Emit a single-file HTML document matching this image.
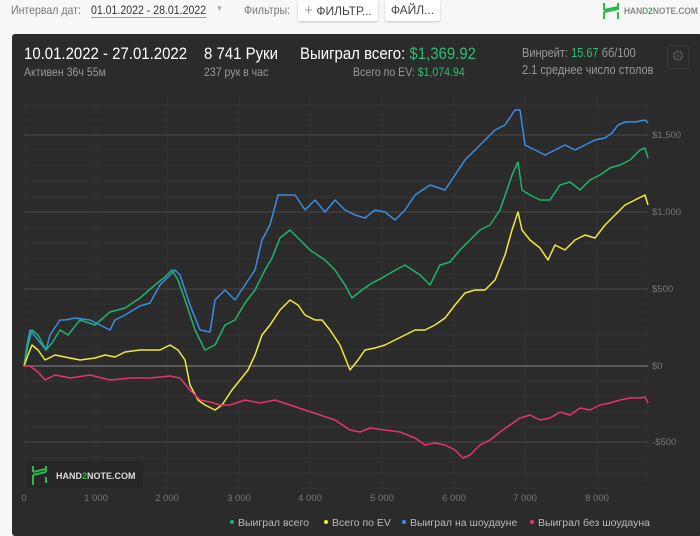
<!DOCTYPE html>
<html><head><meta charset="utf-8"><style>
*{margin:0;padding:0;box-sizing:border-box}
body{width:700px;height:536px;background:#f7f7f7;font-family:"Liberation Sans",sans-serif;position:relative;overflow:hidden}
.t{position:absolute;white-space:nowrap;transform:scaleX(.88);transform-origin:left top}
.btn{position:absolute;background:#fff;border-radius:2px;box-shadow:0 1px 2px rgba(0,0,0,.2);font-size:12px;color:#444;top:0;height:21px;line-height:21px;text-align:center}
#panel{position:absolute;left:12px;top:34px;width:690px;height:502px;background:#2b2b2b;border-radius:3px}
</style></head><body>
<div class="t" style="left:11px;top:3px;font-size:12px;color:#777">Интервал дат:</div>
<div class="t" style="left:91px;top:3px;font-size:12px;color:#333;border-bottom:1px solid #999">01.01.2022 - 28.01.2022</div>
<div class="t" style="left:216px;top:4px;font-size:8px;color:#aaa">▼</div>
<div class="t" style="left:244px;top:3px;font-size:12px;color:#777">Фильтры:</div>
<div class="btn" style="left:298px;width:80px"><span style="color:#999;font-size:15px">+</span> ФИЛЬТР...</div>
<div class="btn" style="left:385px;width:55px">ФАЙЛ...</div>
<svg style="position:absolute;left:602px;top:2px" width="18" height="18"><path d="M2 1v7M2 8l14-3M16 1v7M2 10l14-3M2 10v7M16 10v7" stroke="#2db84a" stroke-width="2" fill="none"/></svg>
<div class="t" style="left:624px;top:6px;font-size:9.5px;font-weight:bold;color:#888">HAND<span style="color:#2db84a">2</span>NOTE.COM</div>
<div id="panel"></div>
<div class="t" style="left:24px;top:44px;font-size:17px;color:#fff">10.01.2022 - 27.01.2022</div>
<div class="t" style="left:24px;top:65px;font-size:12px;color:#999">Активен 36ч 55м</div>
<div class="t" style="left:204px;top:44px;font-size:17px;color:#fff">8 741 Руки</div>
<div class="t" style="left:204px;top:65px;font-size:12px;color:#999">237 рук в час</div>
<div class="t" style="left:300px;top:44px;font-size:17px;color:#fff">Выиграл всего: <span style="color:#2dbd75">$1,369.92</span></div>
<div class="t" style="left:353px;top:65px;font-size:12px;color:#999">Всего по EV: <span style="color:#2dbd75">$1,074.94</span></div>
<div class="t" style="left:522px;top:46px;font-size:12.5px;color:#999">Винрейт: <span style="color:#2dbd75">15.67</span> бб/100</div>
<div class="t" style="left:522px;top:63px;font-size:12.5px;color:#999">2.1 среднее число столов</div>
<div style="position:absolute;left:667px;top:45px;width:22px;height:24px;border:1px solid #3a3a3a;border-radius:3px;color:#555;font-size:15px;text-align:center;line-height:22px">⚙</div>
<svg style="position:absolute;left:0;top:0" width="700" height="536">
<g stroke="#333" stroke-width="1">
<path d="M24 105H648M24 120H648M24 150H648M24 166H648M24 181H648M24 197H648M24 228H648M24 243H648M24 258H648M24 274H648M24 304H648M24 320H648M24 335H648M24 350H648M24 381H648M24 396H648M24 412H648M24 427H648M24 458H648M24 473H648M24 488H648"/>
<path d="M24 95V488M96 95V488M167 95V488M239 95V488M310 95V488M382 95V488M454 95V488M525 95V488M597 95V488M648 95V488"/>
</g>
<g stroke="#444" stroke-width="1.2"><path d="M24 135H648M24 212H648M24 289H648M24 442H648"/></g>
<path d="M24 366H648" stroke="#777" stroke-width="1.2"/>
<g fill="none" stroke-width="1.5" stroke-linejoin="round">
<polyline stroke="#3a8ee0" points="24,366 27,345 30,330 38,340 46,350 50,335 60,320 65,320 75,318 90,320 100,325 110,330 115,320 125,315 140,306 150,303 160,285 170,275 175,270 180,275 185,290 190,305 200,330 210,332 215,300 225,290 235,300 245,285 255,270 262,240 270,225 278,195 295,195 305,210 315,200 325,212 335,200 345,210 355,215 365,218 375,210 385,212 395,220 405,210 415,195 430,185 445,190 455,175 465,160 475,150 485,140 495,130 505,125 515,110 520,110 525,145 535,150 545,155 555,150 565,145 575,150 585,145 595,140 605,138 612,133 618,125 625,122 635,122 645,120 648,123"/>
<polyline stroke="#1fb56a" points="24,366 28,345 32,330 38,335 46,350 52,343 60,330 68,335 80,320 95,325 110,312 125,308 140,298 155,285 165,277 172,270 178,280 185,300 195,330 205,350 215,345 225,325 235,320 245,303 255,290 265,270 272,258 280,238 290,230 300,240 310,250 325,260 335,270 345,285 352,298 362,290 372,283 382,278 392,272 405,265 420,275 430,285 440,265 450,262 460,250 470,240 480,230 490,225 500,210 507,190 512,175 518,162 522,190 530,195 540,200 550,200 560,185 570,182 580,190 590,180 600,175 610,168 620,165 630,160 640,150 645,148 648,158"/>
<polyline stroke="#f2ea3a" points="24,366 28,355 32,345 38,350 45,360 55,355 65,357 80,360 95,358 105,355 115,357 125,352 140,350 160,350 170,345 178,350 185,360 190,385 198,400 205,405 215,410 222,405 232,390 240,380 248,370 255,355 262,335 270,325 280,310 290,300 298,305 305,315 315,320 322,320 330,330 340,345 350,370 358,360 365,350 375,348 385,345 395,340 405,335 415,330 425,330 435,325 445,318 455,305 465,293 475,290 485,290 495,280 505,255 512,230 518,212 522,230 530,240 540,248 548,260 555,245 565,250 575,240 585,235 595,238 605,225 615,215 625,205 635,200 645,195 648,205"/>
<polyline stroke="#e6336e" points="24,366 30,366 38,372 45,380 55,375 70,378 90,375 110,380 130,378 150,378 170,376 180,378 190,390 200,400 210,402 220,405 230,405 245,400 260,403 275,400 290,405 305,410 320,415 335,420 350,430 360,432 370,428 385,430 400,432 415,438 425,445 435,443 445,445 455,450 463,458 470,455 480,445 490,440 500,432 510,425 520,418 530,415 540,420 550,418 560,412 570,415 580,408 590,410 600,405 610,403 620,400 630,398 640,398 645,397 648,403"/>
</g>
<g font-family="Liberation Sans,sans-serif" font-size="9.5" fill="#777">
<text x="652" y="138">$1,500</text><text x="652" y="215">$1,000</text><text x="652" y="292">$500</text><text x="652" y="369">$0</text><text x="652" y="445">-$500</text>
<g text-anchor="middle"><text x="24" y="501">0</text><text x="96" y="501">1 000</text><text x="167" y="501">2 000</text><text x="239" y="501">3 000</text><text x="310" y="501">4 000</text><text x="382" y="501">5 000</text><text x="454" y="501">6 000</text><text x="525" y="501">7 000</text><text x="597" y="501">8 000</text></g>
</g>
<rect x="27" y="461" width="116" height="27" fill="#262626"/>
<path d="M33 466v6M33 472l13-3M46 466v6M33 475l13-3M33 475v10M46 477v6" stroke="#2db84a" stroke-width="2" fill="none"/>
<text x="56" y="479" font-family="Liberation Sans,sans-serif" font-size="9" font-weight="bold" fill="#ddd">HAND<tspan fill="#2db84a">2</tspan>NOTE.COM</text>
<g font-family="Liberation Sans,sans-serif" font-size="10.5" fill="#bbb">
<circle cx="232" cy="522" r="2" fill="#1fb56a"/><text x="238" y="526">Выиграл всего</text>
<circle cx="326" cy="522" r="2" fill="#f2ea3a"/><text x="332" y="526">Всего по EV</text>
<circle cx="404" cy="522" r="2" fill="#3a8ee0"/><text x="410" y="526">Выиграл на шоудауне</text>
<circle cx="532" cy="522" r="2" fill="#e6336e"/><text x="538" y="526">Выиграл без шоудауна</text>
</g>
</svg>
</body></html>
